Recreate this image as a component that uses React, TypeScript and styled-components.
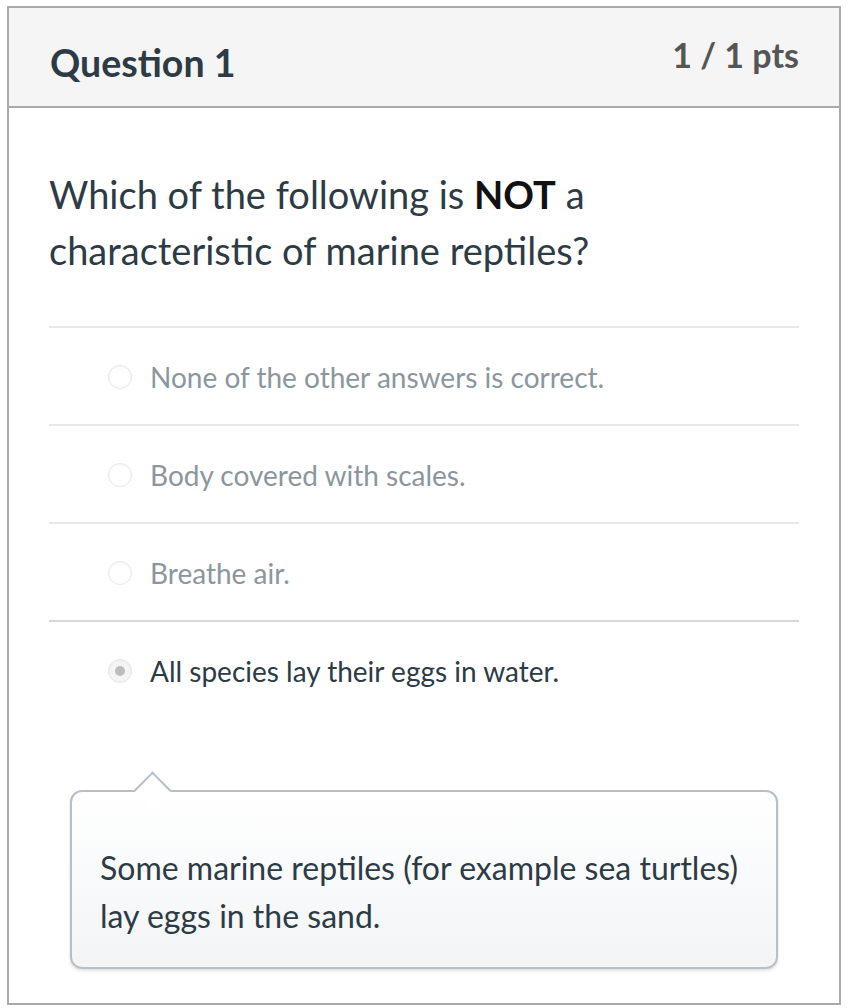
import React from "react";
import styled, { createGlobalStyle } from "styled-components";

const Global = createGlobalStyle`
  html, body { margin: 0; padding: 0; background: #ffffff; }
  body { font-family: Lato, "Noto Sans", sans-serif; }
  * { box-sizing: border-box; }
`;

const Card = styled.section`
  margin: 6px 0 0 7px;
  width: 834px;
  border: 2px solid #aaaaaa;
  background: #ffffff;
`;

const Header = styled.header`
  height: 100px;
  background: #f5f5f5;
  border-bottom: 2px solid #aaaaaa;
  display: flex;
  justify-content: space-between;
  align-items: flex-start;
  padding: 0 40px 0 41px;
`;

const Title = styled.h2`
  margin: 0;
  padding-top: 33px;
  font-family: Lato, sans-serif;
  font-weight: 700;
  font-size: 37.5px;
  line-height: 44px;
  color: #2d3b45;
`;

const Points = styled.div`
  padding-top: 29px;
  font-family: Lato, sans-serif;
  font-weight: 700;
  font-size: 34px;
  line-height: 36px;
  color: #555555;
`;

const Body = styled.div`
  padding: 58px 40px 34px 40px;
`;

const QuestionText = styled.p`
  margin: 0 0 48px;
  font-family: Lato, sans-serif;
  font-size: 38px;
  line-height: 56px;
  color: #2d3b45;
  b { color: #111111; font-weight: 700; }
`;

const AnswerList = styled.div`
  display: flex;
  flex-direction: column;
`;

const AnswerRow = styled.div<{ $selected?: boolean }>`
  height: 98px;
  border-top: 2px solid #e8e8e8;
  display: flex;
  align-items: center;
  padding: 2px 0 0 59px;
  gap: 18px;
  font-family: Lato, sans-serif;
  font-size: 28px;
  color: ${(p) => (p.$selected ? "#2d3b45" : "#8b969e")};
  &:last-child { border-top-color: #d8d8d8; }
`;

const Radio = styled.span<{ $selected?: boolean }>`
  width: 24px;
  height: 24px;
  border-radius: 50%;
  border: 1px solid #e6e6e6;
  background: ${(p) => (p.$selected ? "#f4f4f4" : "#ffffff")};
  box-shadow: inset 0 1px 2px rgba(0, 0, 0, 0.04);
  display: flex;
  align-items: center;
  justify-content: center;
  flex-shrink: 0;
  &::after {
    content: "";
    width: 10px;
    height: 10px;
    border-radius: 50%;
    background: #bdbdbd;
    display: ${(p) => (p.$selected ? "block" : "none")};
  }
`;

const Comment = styled.div`
  position: relative;
  margin: 72px 21px 0;
  border: 2px solid #b6bfc8;
  border-radius: 12px;
  background: linear-gradient(#ffffff, #f2f4f6);
  box-shadow: 0 2px 3px rgba(0, 0, 0, 0.12);
  padding: 52px 28px 27px;
  font-family: Lato, sans-serif;
  font-size: 32px;
  line-height: 48px;
  color: #2d3b45;
  &::before {
    content: "";
    position: absolute;
    left: 67px;
    top: -15px;
    width: 25px;
    height: 25px;
    background: #ffffff;
    border-top: 2px solid #b6bfc8;
    border-left: 2px solid #b6bfc8;
    transform: rotate(45deg);
  }
`;

const answers = [
  "None of the other answers is correct.",
  "Body covered with scales.",
  "Breathe air.",
  "All species lay their eggs in water.",
];

export default function App() {
  return (
    <>
      <Global />
      <Card>
        <Header>
          <Title>Question 1</Title>
          <Points>1 / 1 pts</Points>
        </Header>
        <Body>
          <QuestionText>
            Which of the following is <b>NOT</b> a characteristic of marine reptiles?
          </QuestionText>
          <AnswerList>
            {answers.map((a, i) => (
              <AnswerRow key={a} $selected={i === 3}>
                <Radio $selected={i === 3} />
                {a}
              </AnswerRow>
            ))}
          </AnswerList>
          <Comment>
            Some marine reptiles (for example sea turtles) lay eggs in the sand.
          </Comment>
        </Body>
      </Card>
    </>
  );
}
